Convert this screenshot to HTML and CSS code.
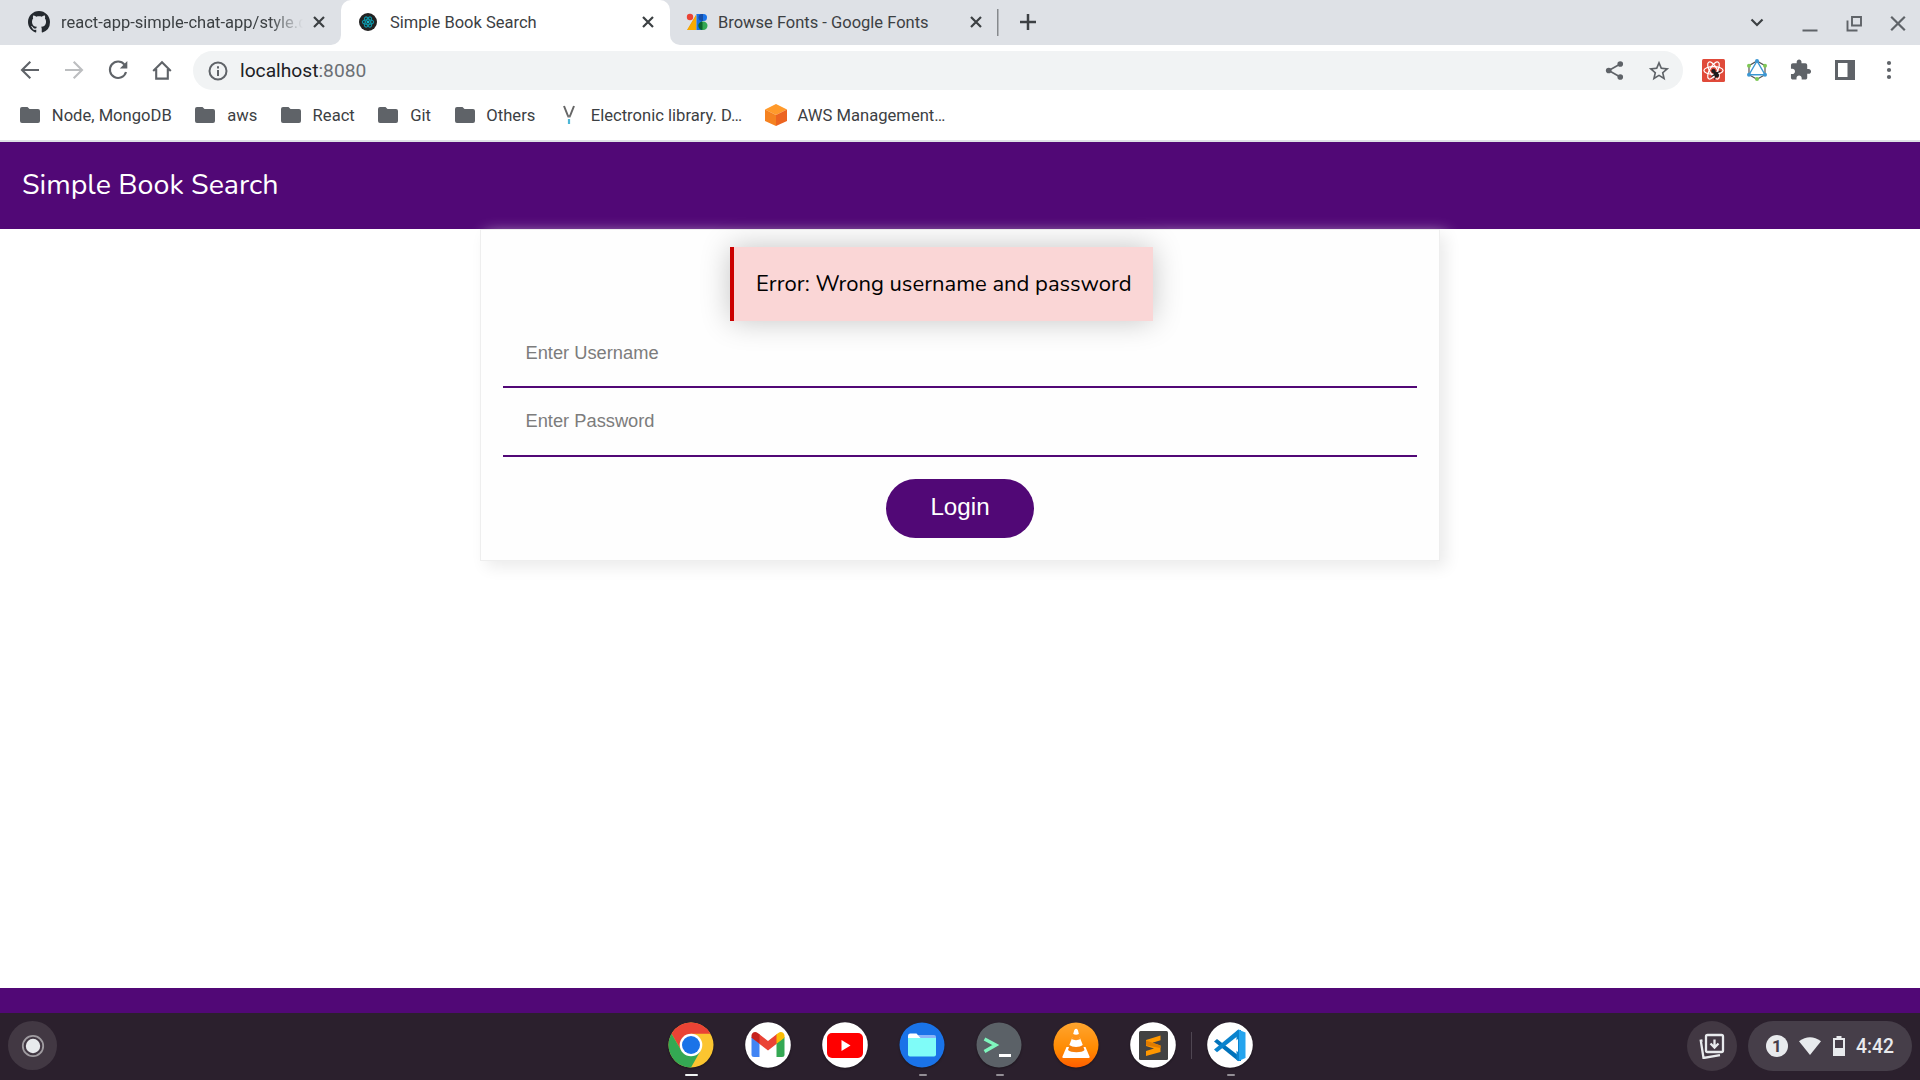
FILE: index.html
```html
<!DOCTYPE html>
<html lang="en">
<head>
<meta charset="utf-8">
<title>Simple Book Search</title>
<link rel="stylesheet" href="styles.css">
</head>
<body>
<div class="screen">

  <div class="tabstrip">
    <div class="tab tab-first">
      <svg class="tab-icon" viewBox="0 0 16 16"><path fill="#24292f" d="M8 0C3.58 0 0 3.58 0 8c0 3.54 2.29 6.53 5.47 7.59.4.07.55-.17.55-.38 0-.19-.01-.82-.01-1.49-2.01.37-2.53-.49-2.69-.94-.09-.23-.48-.94-.82-1.13-.28-.15-.68-.52-.01-.53.63-.01 1.08.58 1.23.82.72 1.21 1.87.87 2.33.66.07-.52.28-.87.51-1.07-1.78-.2-3.64-.89-3.64-3.95 0-.87.31-1.59.82-2.15-.08-.2-.36-1.02.08-2.12 0 0 .67-.21 2.2.82.64-.18 1.32-.27 2-.27s1.36.09 2 .27c1.53-1.04 2.2-.82 2.2-.82.44 1.1.16 1.92.08 2.12.51.56.82 1.27.82 2.15 0 3.07-1.87 3.75-3.65 3.95.29.25.54.73.54 1.48 0 1.07-.01 1.93-.01 2.2 0 .21.15.46.55.38A8.01 8.01 0 0 0 16 8c0-4.42-3.58-8-8-8z"/></svg>
      <span class="tab-title tab-title-fade">react-app-simple-chat-app/style.c</span>
      <svg class="tab-close" viewBox="0 0 12 12"><path d="M1 1l10 10M11 1L1 11"/></svg>
    </div>
    <div class="tab tab-active">
      <svg class="tab-icon" viewBox="0 0 22 22"><circle cx="11" cy="11" r="9" fill="#222"/><g fill="none" stroke="#0d94a6" stroke-width="1.1"><ellipse cx="11" cy="11" rx="5.6" ry="2.3"/><ellipse cx="11" cy="11" rx="5.6" ry="2.3" transform="rotate(60 11 11)"/><ellipse cx="11" cy="11" rx="5.6" ry="2.3" transform="rotate(120 11 11)"/></g><circle cx="11" cy="11" r="1.3" fill="#16b5c9"/></svg>
      <span class="tab-title">Simple Book Search</span>
      <svg class="tab-close" viewBox="0 0 12 12"><path d="M1 1l10 10M11 1L1 11"/></svg>
    </div>
    <div class="tab tab-last">
      <svg class="tab-icon" viewBox="0 0 22 22"><path fill="#f29900" d="M10 3v6L6 19H1L10.5 3z"/><path fill="#f9ab00" d="M10.5 4v15H1.5z"/><circle cx="4" cy="6" r="3.2" fill="#ea4335"/><path fill="#1a73e8" d="M10.5 3H16v16h-5.5z"/><path fill="#1a73e8" d="M15 3h2.500a3.500 3.500 0 0 1 0 7H15z"/><path fill="#174ea6" d="M17 3.100v6.900h-1a3.500 3.500 0 0 1 0-7z"/><circle cx="17.300" cy="14.700" r="4.200" fill="#34a853"/><path fill="#0d652d" d="M16.500 10.500v8.400a4.200 4.200 0 0 1 0-8.400z"/></svg>
      <span class="tab-title">Browse Fonts - Google Fonts</span>
      <svg class="tab-close" viewBox="0 0 12 12"><path d="M1 1l10 10M11 1L1 11"/></svg>
    </div>
    <div class="tab-divider"></div>
    <svg class="new-tab" viewBox="0 0 18 18"><path d="M9 1v16M1 9h16"/></svg>
    <div class="window-controls">
      <svg class="wc wc-menu" viewBox="0 0 22 22"><path d="M5.500 7.500l5.500 5.500 5.500-5.500" stroke-width="2.200"/></svg>
      <svg class="wc" viewBox="0 0 22 22"><path d="M3.500 18.500h15" stroke-width="2"/></svg>
      <svg class="wc" viewBox="0 0 22 22"><path d="M9 5h9v8.500H9zM4.500 8.500v10h10" stroke-width="1.900"/></svg>
      <svg class="wc" viewBox="0 0 22 22"><path d="M4.200 4.700l13.600 13.600M17.800 4.700L4.200 18.300" stroke-width="2.200"/></svg>
    </div>
  </div>

  <div class="toolbar">
    <div class="nav-buttons">
      <span class="nav-btn"><svg viewBox="0 0 20 20"><path d="M19 10H2.500M10.300 1.700L2 10l8.300 8.300"/></svg></span>
      <span class="nav-btn nav-off"><svg viewBox="0 0 20 20"><path d="M1 10h16.500M9.700 1.700L18 10l-8.300 8.300"/></svg></span>
      <span class="nav-btn"><svg viewBox="0 0 20 20"><path d="M16.500 4.600A8.200 8.200 0 1 0 18 12"/><path d="M19.300 1v7.500h-7.500z" fill="#5f6368" stroke="none"/></svg></span>
      <span class="nav-btn"><svg viewBox="0 0 20 20"><path d="M1.200 11L10 2.200 18.800 11M4.200 9v9.600h11.600V9"/></svg></span>
    </div>
    <div class="omnibox">
      <svg class="info" viewBox="0 0 20 20"><circle cx="10" cy="10" r="8.500" fill="none" stroke="#5f6368" stroke-width="2"/><path d="M9 9h2v6H9zM9 5.300h2v2.200H9z" fill="#5f6368"/></svg>
      <span class="url">localhost<span class="port">:8080</span></span>
      <svg class="omni-icon" viewBox="-0.500 0 21 21"><g fill="#5f6368"><circle cx="4" cy="10" r="2.700"/><circle cx="15" cy="3.800" r="2.700"/><circle cx="15" cy="16.200" r="2.700"/><path d="M15 3.800L4 10l11 6.200" fill="none" stroke="#5f6368" stroke-width="1.600"/></g></svg>
      <svg class="omni-icon" viewBox="1.200 1.200 21.600 21.600"><path fill="#5f6368" d="M22 9.240l-7.190-.62L12 2 9.190 8.630 2 9.240l5.460 4.730L5.820 21 12 17.270 18.180 21l-1.630-7.030L22 9.240zM12 15.400l-3.760 2.270 1-4.280-3.320-2.880 4.380-.38L12 6.100l1.710 4.040 4.380.38-3.320 2.880 1 4.280L12 15.400z"/></svg>
    </div>
    <div class="extensions">
      <span class="ext"><svg class="ext-react" viewBox="0 0 23 23"><rect width="23" height="23" rx="1.500" fill="#e04a3a"/><g fill="none" stroke="#fff" stroke-width="1.200"><ellipse cx="11.500" cy="11.500" rx="9.600" ry="3.800"/><ellipse cx="11.500" cy="11.500" rx="9.600" ry="3.800" transform="rotate(60 11.500 11.500)"/><ellipse cx="11.500" cy="11.500" rx="9.600" ry="3.800" transform="rotate(120 11.500 11.500)"/></g><g fill="#1b1b1b" stroke="#1b1b1b"><circle cx="11.500" cy="12" r="1.700"/><ellipse cx="14.300" cy="15.500" rx="2.200" ry="3.200" transform="rotate(-40 14.300 15.500)" stroke="none"/><path d="M9.500 17.500l5-3M12.500 20.500l2-6M14 14.500l4.500-2.500" stroke-width="1.100"/></g></svg></span>
      <span class="ext"><svg viewBox="0 0 22 22"><path d="M11 2l8 4.700v9L11 20.200 3 15.700v-9z" fill="none" stroke="#555" stroke-width="1.200"/><path d="M11 2L3 15.700h16z" fill="none" stroke="#3b97d3" stroke-width="1.400"/><g fill="#3b97d3"><circle cx="11" cy="2" r="2"/><circle cx="3" cy="15.700" r="2"/><circle cx="19" cy="15.700" r="2"/></g><g fill="#7ec855"><circle cx="3" cy="6.700" r="2"/><circle cx="19" cy="6.700" r="2"/><circle cx="11" cy="20" r="2"/></g></svg></span>
      <span class="ext"><svg viewBox="1 0.500 23 23"><path fill="#5f6368" d="M20.500 11H19V7c0-1.100-.9-2-2-2h-4V3.500C13 2.120 11.880 1 10.500 1S8 2.120 8 3.500V5H4c-1.100 0-1.990.9-1.990 2v3.800H3.500c1.490 0 2.700 1.210 2.700 2.700s-1.210 2.700-2.700 2.700H2V20c0 1.100.9 2 2 2h3.800v-1.500c0-1.490 1.210-2.700 2.700-2.700 1.490 0 2.700 1.210 2.700 2.700V22H17c1.100 0 2-.9 2-2v-4h1.500c1.380 0 2.500-1.120 2.500-2.500S21.880 11 20.500 11z"/></svg></span>
      <span class="ext"><svg viewBox="0 0 22 22"><path fill="#5f6368" fill-rule="evenodd" d="M1 1h20v20H1zM4 4v14h9.500V4z"/></svg></span>
      <span class="ext"><svg viewBox="0 0 22 22"><g fill="#5f6368"><circle cx="11" cy="4" r="2.100"/><circle cx="11" cy="11" r="2.100"/><circle cx="11" cy="18" r="2.100"/></g></svg></span>
    </div>
  </div>

  <div class="bookmarks">
    <span class="bm"><svg viewBox="0 0 22 22"><path fill="#5f6368" d="M3 3h5.500l2 2H19a2 2 0 0 1 2 2v10a2 2 0 0 1-2 2H3a2 2 0 0 1-2-2V5a2 2 0 0 1 2-2z"/></svg>Node, MongoDB</span>
    <span class="bm"><svg viewBox="0 0 22 22"><path fill="#5f6368" d="M3 3h5.500l2 2H19a2 2 0 0 1 2 2v10a2 2 0 0 1-2 2H3a2 2 0 0 1-2-2V5a2 2 0 0 1 2-2z"/></svg>aws</span>
    <span class="bm"><svg viewBox="0 0 22 22"><path fill="#5f6368" d="M3 3h5.500l2 2H19a2 2 0 0 1 2 2v10a2 2 0 0 1-2 2H3a2 2 0 0 1-2-2V5a2 2 0 0 1 2-2z"/></svg>React</span>
    <span class="bm"><svg viewBox="0 0 22 22"><path fill="#5f6368" d="M3 3h5.500l2 2H19a2 2 0 0 1 2 2v10a2 2 0 0 1-2 2H3a2 2 0 0 1-2-2V5a2 2 0 0 1 2-2z"/></svg>Git</span>
    <span class="bm"><svg viewBox="0 0 22 22"><path fill="#5f6368" d="M3 3h5.500l2 2H19a2 2 0 0 1 2 2v10a2 2 0 0 1-2 2H3a2 2 0 0 1-2-2V5a2 2 0 0 1 2-2z"/></svg>Others</span>
    <span class="bm"><svg viewBox="0 0 22 22"><path fill="none" stroke="#666" stroke-width="2" d="M6 2l4.200 10.500M16 2l-4.200 10.500"/><path fill="#777" d="M5 1.800h3M14 1.800h3M9.500 11h3v2.500h-3z"/><path fill="#4db6d6" d="M9.900 15h2.200v5H9.900z"/></svg>Electronic library. D…</span>
    <span class="bm"><svg viewBox="0 0 22 22"><path fill="#ff9a2b" d="M11 0l11 5.500L11 11 0 5.500z"/><path fill="#f58220" d="M0 5.500L11 11v11L0 17z"/><path fill="#ec6420" d="M22 5.500L11 11v11l11-5z"/></svg>AWS Management…</span>
  </div>

  <div class="page">
    <header class="app-header">Simple Book Search</header>
    <main class="app-main">
      <form class="login-card">
        <div class="alert">Error: Wrong username and password</div>
        <input class="field" type="text" placeholder="Enter Username">
        <input class="field" type="password" placeholder="Enter Password">
        <button class="login-btn" type="button">Login</button>
      </form>
    </main>
    <footer class="app-footer"></footer>
  </div>

  <div class="shelf">
    <div class="launcher"><svg viewBox="0 0 24 24"><circle cx="12" cy="12" r="10.200" fill="none" stroke="#a09ca1" stroke-width="1.800"/><circle cx="12" cy="12" r="7.200" fill="#e8eaed"/></svg></div>
    <div class="apps">
      <div class="app app-current"><svg viewBox="0 0 46 46"><circle cx="23" cy="23" r="22.500" fill="#fbc530"/><path fill="#ea4335" d="M3.500 11.800A22.500 22.500 0 0 1 42.500 11.800L42.500 11.800H23L13.300 28.600z"/><path fill="#34a853" d="M3.500 11.800A22.500 22.500 0 0 0 23 45.500L32.700 28.600 23 34 13.300 28.600z"/><circle cx="23" cy="23" r="11.300" fill="#fff"/><circle cx="23" cy="23" r="9" fill="#1a73e8"/></svg></div>
      <div class="app"><svg viewBox="0 0 46 46"><circle cx="23" cy="23" r="22.800" fill="#fff"/><path fill="#4285f4" d="M6.500 15l8 6v14H9a2.500 2.500 0 0 1-2.500-2.500z"/><path fill="#34a853" d="M39.500 15l-8 6v14H37a2.500 2.500 0 0 0 2.500-2.500z"/><path fill="#ea4335" d="M14 12l9 7 9-7v9.500l-9 7-9-7z"/><path fill="#c5221f" d="M14.500 12.300v9.500l-8-6v-2c0-3.400 3.600-4.700 6.200-2.900z"/><path fill="#fbbc04" d="M31.500 12.300v9.500l8-6v-2c0-3.400-3.600-4.700-6.200-2.900z"/></svg></div>
      <div class="app"><svg viewBox="0 0 46 46"><circle cx="23" cy="23" r="22.800" fill="#fff"/><rect x="5" y="11" width="36" height="25" rx="5" fill="#f00"/><path fill="#fff" d="M19.500 18v11l9-5.500z"/></svg></div>
      <div class="app app-open"><svg viewBox="0 0 46 46"><circle cx="23" cy="23" r="22.500" fill="#1a73e8"/><path fill="#8ab4f8" d="M19 13h16a2 2 0 0 1 2 2v5H19z"/><path fill="#fff" d="M9 14a2.500 2.500 0 0 1 2-2.500h6.500l4 4.500v3H9z"/><path fill="#7ffcf8" d="M9 16h28v16.500a2 2 0 0 1-2 2H11a2 2 0 0 1-2-2z"/></svg></div>
      <div class="app app-open"><svg viewBox="0 0 46 46"><circle cx="23" cy="23" r="22.500" fill="#5b6167"/><path fill="none" stroke="#7ff5bd" stroke-width="3.400" d="M8.500 17l11.300 6-11.300 6.500"/><path fill="#fff" d="M23 32h12v3H23z"/></svg></div>
      <div class="app"><svg viewBox="0 0 46 46"><defs><linearGradient id="vlc" x1="0" y1="0" x2="0" y2="1"><stop offset="0" stop-color="#ffa52f"/><stop offset=".6" stop-color="#ff8a00"/><stop offset="1" stop-color="#ff5e00"/></linearGradient></defs><circle cx="23" cy="23" r="22.500" fill="url(#vlc)"/><path fill="#fff" d="M13.500 25h19l4 9.500q.6 1.500-1 1.500h-25q-1.600 0-1-1.500z"/><path fill="#f57f0a" d="M17 22h12.500l2 6c-2 3-14 3-16.500 0z"/><path fill="#fff" d="M19.300 15.500h7.500l3 7.500c-3 2.500-10.500 2.500-13.500 0z"/><path fill="#ff941a" d="M20.600 12h4.800l1.800 5c-2 1.500-6.400 1.500-8.400 0z"/><path fill="#fff" d="M21.300 8q1.800-2.600 3.600 0l1 4c-1.500 1-4.200 1-5.700 0z"/></svg></div>
      <div class="app"><svg viewBox="0 0 46 46"><circle cx="23" cy="23" r="22.800" fill="#fff"/><rect x="9" y="9" width="29" height="29" rx="1.500" fill="#424242"/><path fill="#ff9800" d="M30.500 13.500v4.700l-8 2.600 8 2.700v6.500L16 34v-5l8-2.500-8-2.500v-6z"/><path fill="#e07c00" d="M16 18.500l14.500 5v2.500L16 23.500z"/></svg></div>
      <div class="shelf-divider"></div>
      <div class="app app-open"><svg viewBox="0 0 46 46"><circle cx="23" cy="23" r="22.800" fill="#fff"/><path fill="#0072ba" d="M7 19.500l3-2.600L34 35.500v3.600h-3z"/><path fill="#0a83cd" d="M7 27.500l3 2.800L34 11.500V8l-3-.2z"/><path fill="#25a4ee" d="M31 7.500l7.500 3v25.500l-7.500 3.300z"/><path fill="#0a83cd" d="M29.500 9L32 8v31l-2.500-1z"/><path fill="#fff" d="M31 17v13l-9-6.500z"/></svg></div>
    </div>
    <div class="status">
      <div class="holding"><svg viewBox="0 0 26 26"><g fill="none" stroke="#e8eaed" stroke-width="2.300"><rect x="7" y="2" width="17" height="17" rx="1.500"/><path d="M3.500 7.500l-1.700.3L4.500 25l16.500-2.800"/></g><path d="M15.500 6.500v7.500M11.500 10.500l4 4 4-4" fill="none" stroke="#e8eaed" stroke-width="2.300"/></svg></div>
      <div class="tray">
        <span class="badge">1</span>
        <svg class="wifi" viewBox="0 0 22 18"><path fill="#e8eaed" d="M0 4.200Q11-3.800 22 4.200L11 18z"/></svg>
        <svg class="battery" viewBox="0 0 12 20"><path fill="#e8eaed" fill-rule="evenodd" d="M3.500 0h5v2H12v18H0V2h3.500zM2 4v8h8V4z"/></svg>
        <span class="clock">4:42</span>
      </div>
    </div>
  </div>
</div>
</body>
</html>
```
FILE: styles.css
```css
* { box-sizing: border-box; }

body {
  margin: 0;
  font-family: Roboto, sans-serif;
  color: #3c4043;
  background: #fff;
}

svg { display: block; flex: none; }

.screen {
  width: 1920px;
  height: 1080px;
  display: flex;
  flex-direction: column;
  overflow: hidden;
}

/* Tab strip */
.tabstrip {
  height: 45px;
  display: flex;
  align-items: stretch;
  background: #fff;
  flex: none;
}

.tab {
  display: flex;
  align-items: center;
  padding-bottom: 1px;
  font-size: 16.5px;
  line-height: 22px;
  background: #dee1e6;
}

.tab-first {
  width: 341px;
  padding-left: 28px;
  padding-right: 16px;
  border-bottom-right-radius: 10px;
}

.tab-active {
  width: 329px;
  padding-left: 16px;
  padding-right: 16px;
  background: linear-gradient(#dee1e6 50%, #fff 50%);
  position: relative;
  z-index: 0;
}

.tab-active::before {
  content: "";
  position: absolute;
  inset: 0;
  z-index: -1;
  background: #fff;
  border-radius: 10px 10px 0 0;
}

.tab-last {
  width: 327px;
  padding-left: 16px;
  padding-right: 15px;
  border-bottom-left-radius: 10px;
}

.tab-icon { width: 22px; height: 22px; }

.tab-title {
  flex: 1;
  margin: 0 16px 0 11px;
  padding-top: 2px;
  white-space: nowrap;
}

.tab-last .tab-title { margin-left: 10px; }

.tab-title-fade {
  min-width: 0;
  margin-right: 10px;
  -webkit-mask-image: linear-gradient(90deg, #000 86%, transparent);
  mask-image: linear-gradient(90deg, #000 86%, transparent);
}

.tab-close {
  width: 12px;
  height: 12px;
  stroke: #3c4043;
  stroke-width: 2.2;
}

.tab-divider {
  width: 18px;
  background: linear-gradient(#86898d, #86898d) 0 9px / 1.5px 27px no-repeat, #dee1e6;
}

.new-tab {
  box-sizing: content-box;
  width: 18px;
  height: 44px;
  padding: 0 12px 1px 4px;
  stroke: #3c4043;
  stroke-width: 2.5;
  background: #dee1e6;
}

.window-controls {
  flex: 1;
  display: flex;
  justify-content: flex-end;
  align-items: center;
  gap: 22px;
  padding-right: 11px;
  background: #dee1e6;
}

.wc { width: 22px; height: 22px; fill: none; stroke: #5f6368; }
.wc-menu { margin-right: 9px; stroke: #3c4043; }

/* Toolbar */
.toolbar {
  height: 50px;
  display: flex;
  align-items: center;
  padding: 0 9px 0 8px;
  flex: none;
}

.nav-buttons { display: flex; }

.nav-btn {
  width: 44px;
  display: flex;
  justify-content: center;
}

.nav-btn svg {
  width: 20px;
  height: 20px;
  fill: none;
  stroke: #5f6368;
  stroke-width: 2.1;
}

.nav-off svg { stroke: #bcbec0; }

.omnibox {
  flex: 1;
  height: 39px;
  margin: 1px 8px 0 9px;
  padding: 0 13px 0 15px;
  display: flex;
  align-items: center;
  gap: 22px;
  border-radius: 20px;
  background: #f1f3f4;
}

.info { width: 20px; height: 20px; }

.url {
  flex: 1;
  margin-left: -10px;
  padding-bottom: 1px;
  font-size: 19.2px;
  color: #202124;
}

.port { color: #6b6f74; }

.omni-icon { width: 22px; height: 22px; }

.extensions { display: flex; }

.ext {
  width: 44px;
  display: flex;
  justify-content: center;
}

.ext svg { width: 22px; height: 22px; }
.ext .ext-react { width: 23px; height: 23px; }

/* Bookmarks bar */
.bookmarks {
  height: 47px;
  display: flex;
  align-items: center;
  gap: 22.6px;
  padding: 0 19px 5px;
  border-bottom: 2px solid #dee1e6;
  font-size: 16.6px;
  flex: none;
}

.bm { display: flex; align-items: center; gap: 10.8px; white-space: nowrap; }
.bm svg { width: 22px; height: 22px; }

/* Web application */
.page {
  flex: 1;
  display: flex;
  flex-direction: column;
  font-family: Nunito, Lato, sans-serif;
}

.app-header {
  height: 87px;
  padding-left: 22px;
  line-height: 85px;
  font-size: 28.6px;
  color: #fff;
  background: #510876;
}

.app-main {
  flex: 1;
  display: flex;
  justify-content: center;
  align-items: flex-start;
}

.login-card {
  width: 960px;
  height: 332px;
  padding: 17px 22px 22px;
  display: flex;
  flex-direction: column;
  align-items: center;
  border: 1px solid #eee;
  background: #fefefe;
  box-shadow: 6px 6px 15px #ebebeb;
}

.alert {
  width: 423px;
  height: 74px;
  margin-right: 37px;
  padding-left: 22px;
  line-height: 75px;
  font-size: 22px;
  white-space: nowrap;
  color: #000;
  border-left: 4px solid #c00;
  background: #fad6d6;
  box-shadow: 0 0 30px rgba(0, 0, 0, 0.23);
}

.field {
  width: 914px;
  height: 69px;
  padding: 0 22px 2px 22.5px;
  border: 0;
  border-bottom: 2px solid #510876;
  font: 18.3px "Liberation Sans", Arial, sans-serif;
  background: transparent;
}

.alert + .field { height: 67px; }
.field::placeholder { color: #7c7c7c; }

.login-btn {
  width: 148px;
  height: 59px;
  margin-top: 22px;
  padding: 0 0 3px;
  border: 0;
  border-radius: 30px;
  font: 24.2px "Liberation Sans", Arial, sans-serif;
  color: #fff;
  background: #510876;
}

.app-footer { height: 25px; background: #510876; }

/* Shelf */
.shelf {
  height: 67px;
  display: grid;
  grid-template-columns: 1fr auto 1fr;
  background: #2b202d;
  flex: none;
}

.launcher {
  width: 49px;
  height: 49px;
  margin: 8px;
  display: grid;
  place-items: center;
  border-radius: 50%;
  background: #423843;
}

.launcher svg { width: 24px; height: 24px; }

.apps { display: flex; margin-left: 1px; }

.app {
  width: 77px;
  height: 67px;
  padding-top: 9px;
  display: flex;
  flex-direction: column;
  align-items: center;
}

.app svg {
  width: 46px;
  height: 46px;
  filter: drop-shadow(0 1px 1px rgba(0, 0, 0, 0.35));
}

.app-current::after,
.app-open::after {
  content: "";
  width: 8px;
  height: 2px;
  margin: 6px 0 0 1px;
  border-radius: 1px;
  background: #938e95;
}

.app-current::after { width: 13px; background: #f1f3f4; }

.shelf-divider {
  width: 1px;
  height: 27px;
  margin: 19px 0 0 -1px;
  background: #4f4652;
}

.status {
  display: flex;
  justify-content: flex-end;
  gap: 11px;
  padding: 8px 8px 0 0;
}

.holding {
  width: 50px;
  height: 50px;
  display: grid;
  place-items: center;
  border-radius: 50%;
  background: #423843;
}

.holding svg { width: 26px; height: 26px; }

.tray {
  width: 164px;
  height: 50px;
  padding-left: 18px;
  display: flex;
  align-items: center;
  border-radius: 25px;
  background: #463e49;
}

.badge {
  width: 22px;
  height: 22px;
  line-height: 22px;
  border-radius: 50%;
  text-align: center;
  font-size: 17px;
  font-weight: 700;
  color: #463e49;
  background: #e8eaed;
}

.wifi { width: 22px; height: 18px; margin-left: 11px; }
.battery { width: 12px; height: 20px; margin-left: 12px; }

.clock {
  margin-left: 11px;
  font-size: 19.3px;
  font-weight: 500;
  color: #e8eaed;
}
```
